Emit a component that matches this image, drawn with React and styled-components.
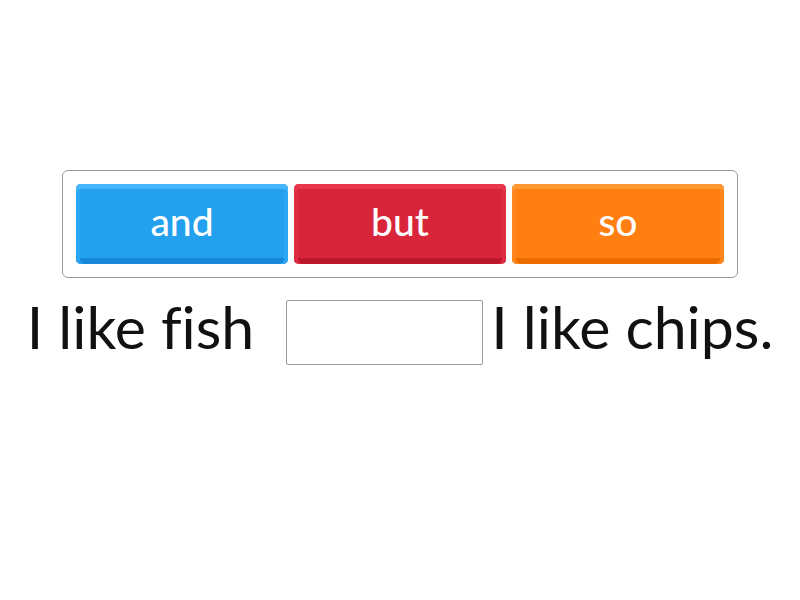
import React from 'react';
import styled, { createGlobalStyle } from 'styled-components';

const GlobalStyle = createGlobalStyle`
  html, body {
    margin: 0;
    padding: 0;
    background: #ffffff;
    font-family: Lato, "Noto Sans", sans-serif;
    font-variant-ligatures: none;
  }
`;

const Page = styled.div`
  width: 800px;
  height: 600px;
  display: flex;
  flex-direction: column;
  align-items: center;
  padding-top: 170px;
  box-sizing: border-box;
`;

const Tray = styled.div`
  width: 676px;
  box-sizing: border-box;
  display: flex;
  gap: 6px;
  padding: 13px;
  border: 1px solid #9c9c9c;
  border-radius: 6px;
`;

const colours = {
  blue: { top: '#45b6fa', main: '#23a0ee', side: '#2aa6f2', bottom: '#1788d8' },
  red: { top: '#e9374b', main: '#d9253a', side: '#de2c40', bottom: '#bd172c' },
  orange: { top: '#ff9832', main: '#ff7f12', side: '#ff861c', bottom: '#ec6c00' },
};

const Tile = styled.div`
  flex: 1;
  height: 80px;
  border-radius: 5px;
  background: ${p => colours[p.$tone].main};
  box-shadow: inset 0 5px 0 ${p => colours[p.$tone].top},
    inset 4px 0 0 ${p => colours[p.$tone].side},
    inset -4px 0 0 ${p => colours[p.$tone].side},
    inset 0 -6px 0 ${p => colours[p.$tone].bottom};
  display: flex;
  align-items: center;
  justify-content: center;
  color: #ffffff;
  font-size: 39px;
  font-weight: 500;
  padding-bottom: 6px;
  box-sizing: border-box;
`;

const Sentence = styled.div`
  margin-top: 22px;
  display: flex;
  align-items: flex-start;
  font-size: 59px;
  color: #111111;
  white-space: nowrap;
`;

const Words = styled.span`
  line-height: 54px;
  margin: ${p => p.$margin || '0'};
`;

const Blank = styled.div`
  width: 197px;
  height: 65px;
  box-sizing: border-box;
  border: 1px solid #9a9a9a;
  border-radius: 2px;
`;

export default function App() {
  return (
    <>
      <GlobalStyle />
      <Page>
        <Tray>
          <Tile $tone="blue">and</Tile>
          <Tile $tone="red">but</Tile>
          <Tile $tone="orange">so</Tile>
        </Tray>
        <Sentence>
          <Words $margin="0 32px 0 0">I like fish</Words>
          <Blank />
          <Words $margin="0 0 0 8px">I like chips.</Words>
        </Sentence>
      </Page>
    </>
  );
}
